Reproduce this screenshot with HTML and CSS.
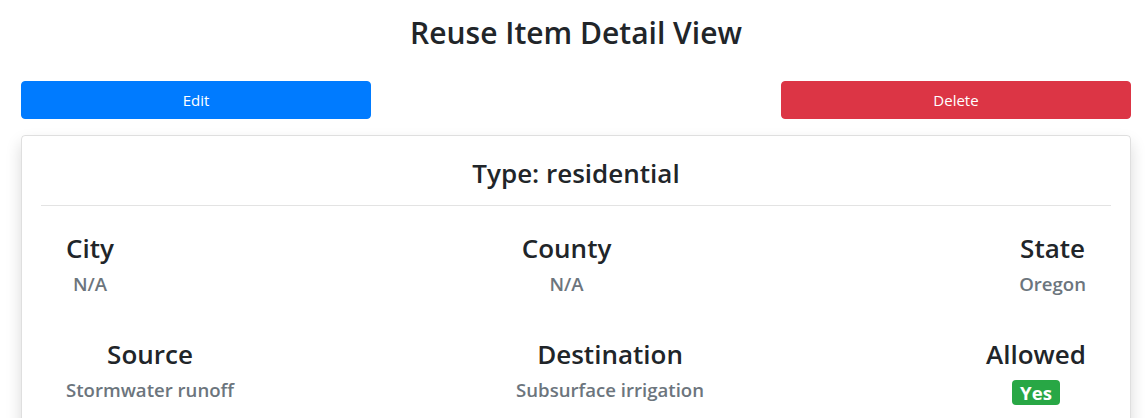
FILE: index.html
```html
<!DOCTYPE html>
<html lang="en">
<head>
<meta charset="utf-8">
<title>Reuse Item Detail View</title>
<link rel="stylesheet" href="styles.css">
</head>
<body>
<div class="page">
  <h2 class="page-title">Reuse Item Detail View</h2>
  <div class="actions">
    <button class="btn btn-primary">Edit</button>
    <button class="btn btn-danger">Delete</button>
  </div>
  <div class="card">
    <h3 class="card-title">Type: residential</h3>
    <hr class="divider">
    <div class="row">
      <div class="field">
        <h3 class="label">City</h3>
        <p class="value">N/A</p>
      </div>
      <div class="field">
        <h3 class="label">County</h3>
        <p class="value">N/A</p>
      </div>
      <div class="field">
        <h3 class="label">State</h3>
        <p class="value">Oregon</p>
      </div>
    </div>
    <div class="row">
      <div class="field">
        <h3 class="label">Source</h3>
        <p class="value">Stormwater runoff</p>
      </div>
      <div class="field">
        <h3 class="label">Destination</h3>
        <p class="value">Subsurface irrigation</p>
      </div>
      <div class="field">
        <h3 class="label">Allowed</h3>
        <p class="value"><span class="badge">Yes</span></p>
      </div>
    </div>
  </div>
</div>
</body>
</html>
```

FILE: styles.css
```css
* { box-sizing: border-box; }
html, body {
  margin: 0;
  padding: 0;
  background: #fff;
  color: #212529;
  font-family: "Open Sans", "Noto Sans", sans-serif;
}
.page {
  width: 1110px;
  margin-left: 21px;
  padding-top: 14px;
}
.page-title {
  margin: 0;
  font-size: 30px;
  font-weight: 600;
  line-height: 38px;
  text-align: center;
}
.actions {
  display: flex;
  justify-content: space-between;
  margin-top: 29px;
}
.btn {
  width: 350px;
  height: 38px;
  border: 1px solid transparent;
  border-radius: 4px;
  color: #fff;
  font-family: inherit;
  font-size: 15px;
  line-height: 1.5;
  padding: 0;
}
.btn-primary { background: #007bff; border-color: #007bff; }
.btn-danger { background: #dc3545; border-color: #dc3545; }
.card {
  margin-top: 16px;
  border: 1px solid rgba(0, 0, 0, 0.125);
  border-radius: 4px;
  padding: 20px 19px 40px;
  box-shadow: 0 8px 16px rgba(0, 0, 0, 0.15);
}
.card-title {
  margin: 0;
  font-size: 26px;
  font-weight: 600;
  line-height: 34px;
  text-align: center;
}
.divider {
  margin: 15px 0 0;
  border: 0;
  border-top: 1px solid #e3e3e3;
}
.row {
  display: flex;
  justify-content: space-between;
  padding: 0 25px;
  margin-top: 25px;
}
.row + .row { margin-top: 40px; }
.field { text-align: center; }
.label {
  margin: 0 0 5px;
  font-size: 26px;
  font-weight: 600;
  line-height: 34px;
}
.value {
  margin: 0;
  font-size: 18.6px;
  font-weight: 600;
  line-height: 27px;
  color: #6c757d;
}
.badge {
  display: inline-block;
  background: #28a745;
  color: #fff;
  border-radius: 4px;
  padding: 0 8px;
  font-size: 18.6px;
  line-height: 25px;
  font-weight: 700;
  vertical-align: middle;
}
```
